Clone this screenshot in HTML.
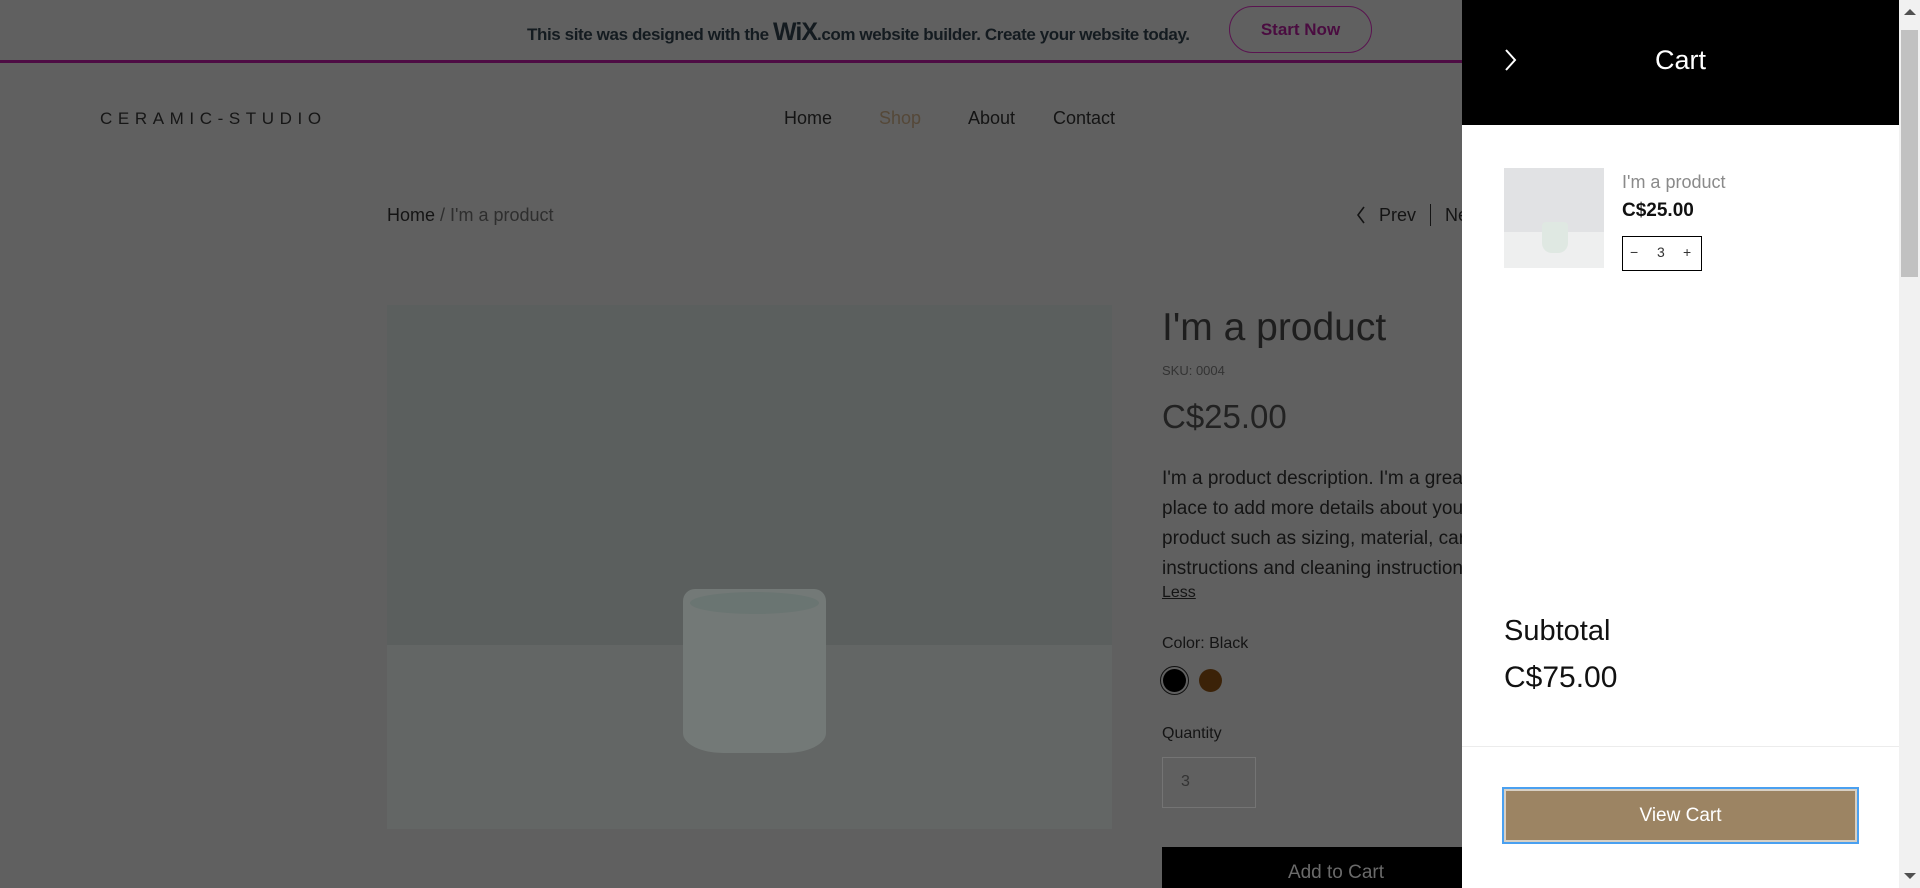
<!DOCTYPE html>
<html><head><meta charset="utf-8"><style>
*{margin:0;padding:0;box-sizing:border-box}
body{width:1920px;height:888px;overflow:hidden;background:#606060;font-family:"Liberation Sans",sans-serif;position:relative;color:#141414}
.a{position:absolute;white-space:nowrap}
</style></head><body>
<!-- banner -->
<div class="a" style="left:527px;top:18px;font-size:17px;font-weight:bold;color:#141b20;letter-spacing:-0.4px">This site was designed with the <span style="font-size:25px;letter-spacing:-1px">WiX</span>.com website builder. Create your website today.</div>
<div class="a" style="left:1229px;top:6px;width:143px;height:47px;border:1px solid #5a1450;border-radius:24px;color:#4a0c40;font-size:17px;font-weight:bold;text-align:center;line-height:45px">Start Now</div>
<div class="a" style="left:0;top:60px;width:1462px;height:3px;background:#4e0c44"></div>
<!-- header -->
<div class="a" style="left:100px;top:109px;font-size:17px;letter-spacing:5.6px;color:#161616">CERAMIC-STUDIO</div>
<div class="a" style="left:784px;top:108px;font-size:18px">Home</div>
<div class="a" style="left:879px;top:108px;font-size:18px;color:#554838">Shop</div>
<div class="a" style="left:968px;top:108px;font-size:18px">About</div>
<div class="a" style="left:1053px;top:108px;font-size:18px">Contact</div>
<!-- breadcrumb -->
<div class="a" style="left:387px;top:205px;font-size:18px">Home <span style="color:#2e2e2e">/ I'm a product</span></div>
<svg class="a" style="left:1355px;top:205px" width="12" height="20"><path d="M9 2 L3 10 L9 18" stroke="#141414" stroke-width="1.6" fill="none"/></svg>
<div class="a" style="left:1379px;top:205px;font-size:18px">Prev</div>
<div class="a" style="left:1430px;top:204px;width:1px;height:22px;background:#141414"></div>
<div class="a" style="left:1445px;top:205px;font-size:18px">Next</div>
<!-- image -->
<div class="a" style="left:387px;top:305px;width:725px;height:340px;background:#5b5f5e"></div>
<div class="a" style="left:387px;top:645px;width:725px;height:184px;background:#636665"></div>
<div class="a" style="left:683px;top:589px;width:143px;height:164px;background:#737977;border-radius:12px 12px 40px 40px/12px 12px 20px 20px"></div>
<div class="a" style="left:690px;top:592px;width:129px;height:22px;background:#6a7572;border-radius:50%"></div>
<!-- product info -->
<div class="a" style="left:1162px;top:306px;font-size:39px;color:#1e1e1e">I'm a product</div>
<div class="a" style="left:1162px;top:363px;font-size:13px;color:#333">SKU: 0004</div>
<div class="a" style="left:1162px;top:398px;font-size:33px;color:#222">C$25.00</div>
<div class="a" style="left:1162px;top:464px;font-size:19px;line-height:30px;color:#141414">I'm a product description. I'm a great<br>place to add more details about your<br>product such as sizing, material, care<br>instructions and cleaning instructions.</div>
<div class="a" style="left:1162px;top:584px;font-size:16px;text-decoration:underline">Less</div>
<div class="a" style="left:1162px;top:635px;font-size:16px">Color: Black</div>
<div class="a" style="left:1160px;top:666px;width:29px;height:29px;border:1px solid #111;border-radius:50%"></div>
<div class="a" style="left:1163px;top:669px;width:23px;height:23px;background:#000;border-radius:50%"></div>
<div class="a" style="left:1199px;top:669px;width:23px;height:23px;background:#3b2208;border-radius:50%"></div>
<div class="a" style="left:1162px;top:725px;font-size:16px">Quantity</div>
<div class="a" style="left:1162px;top:757px;width:94px;height:51px;border:1px solid #747474;font-size:16px;padding:15px 0 0 18px;color:#333">3</div>
<div class="a" style="left:1162px;top:847px;width:348px;height:41px;background:#000;color:#6a6a6a;font-size:19px;text-align:center;padding-top:15px">Add to Cart</div>
<!-- cart panel -->
<div class="a" style="left:1462px;top:0;width:437px;height:888px;background:#fff"></div>
<div class="a" style="left:1462px;top:0;width:437px;height:125px;background:#000"></div>
<svg class="a" style="left:1504px;top:48px" width="14" height="24"><path d="M2 2 L11 12 L2 22" stroke="#fff" stroke-width="2" fill="none"/></svg>
<div class="a" style="left:1462px;top:45px;width:437px;text-align:center;color:#fff;font-size:27px">Cart</div>
<div class="a" style="left:1504px;top:168px;width:100px;height:100px;background:#e1e2e4"></div>
<div class="a" style="left:1504px;top:232px;width:100px;height:36px;background:#eeefef"></div>
<div class="a" style="left:1542px;top:222px;width:26px;height:31px;background:#dfe8e2;border-radius:4px 4px 10px 10px"></div>
<div class="a" style="left:1622px;top:172px;font-size:18px;color:#8a8a8a">I'm a product</div>
<div class="a" style="left:1622px;top:200px;font-size:19px;font-weight:bold;color:#111">C$25.00</div>
<div class="a" style="left:1622px;top:236px;width:80px;height:35px;border:1px solid #000"></div>
<div class="a" style="left:1630px;top:244px;font-size:14px;color:#333">−</div>
<div class="a" style="left:1657px;top:244px;font-size:14px;color:#333">3</div>
<div class="a" style="left:1683px;top:244px;font-size:14px;color:#333">+</div>
<div class="a" style="left:1504px;top:615px;font-size:29px;color:#111">Subtotal</div>
<div class="a" style="left:1504px;top:661px;font-size:30px;color:#111">C$75.00</div>
<div class="a" style="left:1462px;top:746px;width:437px;height:1px;background:#ececec"></div>
<div class="a" style="left:1502px;top:787px;width:357px;height:57px;border:2px solid #4aa0f0;background:#9c8463;box-shadow:inset 0 0 0 2px #d8d0c4;color:#fff;font-size:19px;text-align:center;line-height:53px">View Cart</div>
<!-- scrollbar -->
<div class="a" style="left:1899px;top:0;width:21px;height:888px;background:#f1f1f1"></div>
<div class="a" style="left:1901px;top:30px;width:17px;height:247px;background:#c1c1c1"></div>
<div class="a" style="left:1904px;top:9px;width:0;height:0;border-left:6px solid transparent;border-right:6px solid transparent;border-bottom:6px solid #505050"></div>
<div class="a" style="left:1904px;top:873px;width:0;height:0;border-left:6px solid transparent;border-right:6px solid transparent;border-top:6px solid #505050"></div>
</body></html>
